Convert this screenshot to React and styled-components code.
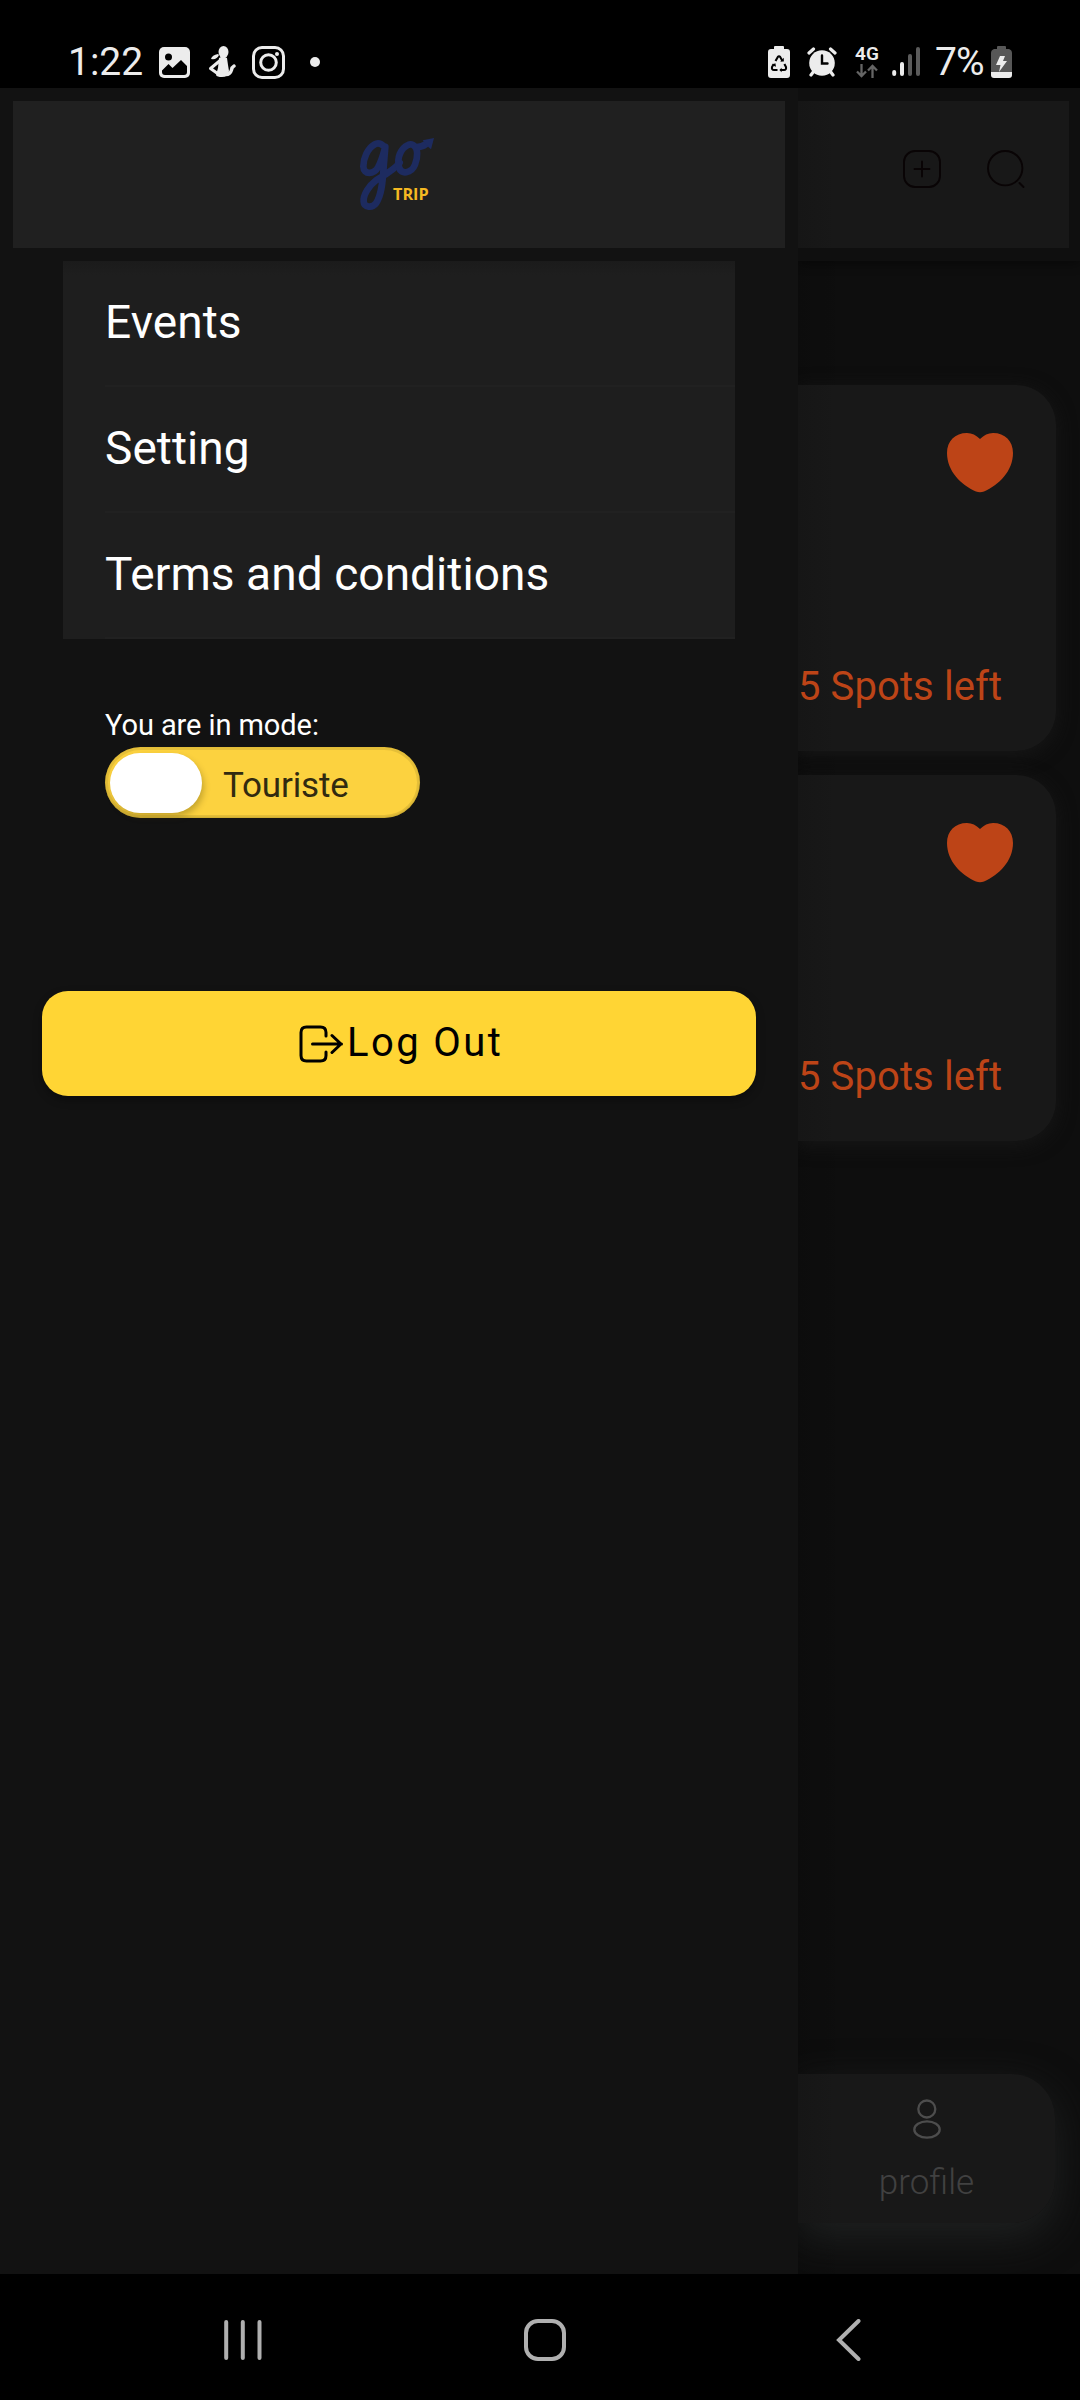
import React from "react";
import styled, { createGlobalStyle } from "styled-components";

const GlobalStyle = createGlobalStyle`
  * { box-sizing: border-box; }
  body { margin: 0; background: #000; font-family: Roboto, "Liberation Sans", sans-serif; }
  svg { display: block; flex: none; }
`;

const Screen = styled.div`
  display: flex;
  flex-direction: column;
  width: 1080px;
  height: 2400px;
  overflow: hidden;
  background: #000;
`;

const StatusBar = styled.header`
  display: flex;
  justify-content: space-between;
  height: 88px;
  padding: 35px 68px 0 68px;
  color: #ececec;
`;

const StatusGroup = styled.div`
  display: flex;
  align-items: center;
  height: 54px;
`;

const StatusText = styled.span`
  width: ${(p) => p.$width}px;
  font-size: 39px;
  line-height: 54px;
  letter-spacing: ${(p) => p.$spacing || 0}px;
  white-space: nowrap;
`;

const StatusIcon = styled.span`
  display: flex;
  margin-left: ${(p) => p.$gap}px;
`;

const Network = styled.div`
  display: flex;
  flex-direction: column;
  align-items: center;
  gap: 2px;
  width: 24px;
  margin-left: 18px;
  padding-bottom: 2px;
  font-size: 19px;
  font-weight: 600;
  line-height: 17px;
`;

const Body = styled.div`
  display: grid;
  grid-template-columns: 798px 282px;
  height: 2186px;
`;

const Drawer = styled.aside`
  display: flex;
  flex-direction: column;
  background: #121212;
`;

const DrawerHeader = styled.div`
  height: 173px;
  padding: 13px;
`;

const LogoPanel = styled.div`
  height: 147px;
  padding: 35px 0 0 345px;
  background: #202020;
`;

const MenuList = styled.nav`
  width: 672px;
  margin-left: 63px;
  padding-left: 42px;
  background: linear-gradient(#1b1b1b, #1e1e1e 14px);
`;

const MenuItem = styled.a`
  display: flex;
  align-items: center;
  height: 126px;
  padding-bottom: 3px;
  border-bottom: 2px solid #212121;
  color: #fff;
  font-size: 46px;
  letter-spacing: 0.07px;
`;

const ModeSection = styled.section`
  display: flex;
  flex-direction: column;
  padding: 68px 0 0 105px;
`;

const ModeLabel = styled.span`
  height: 40px;
  color: #fff;
  font-size: 29px;
  line-height: 36px;
  letter-spacing: -0.08px;
`;

const Toggle = styled.div`
  display: flex;
  align-items: center;
  width: 315px;
  height: 71px;
  padding-left: 5px;
  border-radius: 36px;
  background: #fcd23f;
  box-shadow: inset 0 0 0 3px rgba(90, 80, 20, 0.14), inset 0 -1px 2px rgba(90, 80, 20, 0.2);
`;

const Knob = styled.span`
  width: 92px;
  height: 60px;
  border-radius: 30px;
  background: #fff;
  box-shadow: 2px 4px 6px rgba(60, 50, 0, 0.28);
`;

const ToggleText = styled.span`
  padding: 7px 0 0 21px;
  color: #312a10;
  font-size: 35px;
  line-height: 42px;
  letter-spacing: -0.15px;
`;

const LogoutButton = styled.button`
  display: flex;
  align-items: center;
  width: 714px;
  height: 105px;
  margin: 173px 0 0 42px;
  padding: 0 0 2px 257px;
  border: 0;
  border-radius: 26px;
  background: #ffd534;
  box-shadow: 0 4px 8px rgba(0, 0, 0, 0.35);
  color: #000;
  font-family: inherit;
  font-size: 40px;
  letter-spacing: 2.4px;
`;

const LogoutIcon = styled.span`
  display: flex;
  padding-top: 3px;
  margin-right: 4px;
`;

const Page = styled.main`
  display: flex;
  flex-direction: column;
  overflow: hidden;
  background: linear-gradient(90deg, rgba(0, 0, 0, 0.14), transparent 50px), #0e0e0e;
`;

const PageHeader = styled.div`
  height: 173px;
  padding: 13px 11px 13px 0;
  background: #0f0f0f;
  box-shadow: 0 3px 10px rgba(0, 0, 0, 0.4);
`;

const Actions = styled.div`
  display: flex;
  align-items: flex-start;
  gap: 46px;
  height: 147px;
  padding: 49px 0 0 105px;
  background: linear-gradient(90deg, #161616, #181818 36px);
`;

const Cards = styled.section`
  display: flex;
  flex-direction: column;
  gap: 24px;
  padding-top: 124px;
`;

const Card = styled.article`
  display: flex;
  flex-direction: column;
  justify-content: space-between;
  width: 258px;
  height: 366px;
  padding: 48px 43px 40px 0;
  border-radius: 0 40px 40px 0;
  background: linear-gradient(90deg, #161616, #181818 36px);
  box-shadow: 0 4px 18px 1px #161616;
`;

const Heart = styled.span`
  display: flex;
  justify-content: flex-end;
`;

const Spots = styled.span`
  align-self: flex-end;
  width: 215px;
  color: #bd4417;
  font-size: 40px;
  line-height: 48px;
  letter-spacing: 0.1px;
  white-space: nowrap;
`;

const TabBar = styled.footer`
  display: flex;
  flex-direction: column;
  align-items: center;
  width: 257px;
  height: 149px;
  margin-top: auto;
  margin-bottom: 51px;
  padding-top: 25px;
  border-radius: 0 44px 44px 0;
  background: linear-gradient(90deg, #161616, #181818 36px);
  box-shadow: 0 14px 42px 0 #1f2121;
`;

const TabLabel = styled.span`
  margin-top: 23px;
  color: #414141;
  font-size: 35px;
  font-weight: 300;
  line-height: 42px;
`;

const NavBar = styled.div`
  display: flex;
  align-items: center;
  height: 126px;
  padding: 6px 0 0 223px;
`;

const NavButton = styled.span`
  display: flex;
  margin-right: ${(p) => p.$gap || 0}px;
`;

const Logo = () => (
  <svg width="78" height="76" viewBox="114 78 234 228" fill="none">
    <g stroke="#1d2b60" strokeWidth="20" strokeLinecap="round" strokeLinejoin="round">
      <path d="M193 110C184 101 174 97 164 103C142 116 130 145 130 169C131 196 162 193 174 172C186 151 191 128 196 110L191 171C188 220 184 256 168 280C157 295 132 293 131 275C129 254 148 226 168 211C194 195 224 178 239 158" />
      <path d="M264 105C242 115 230 144 237 171C242 196 275 190 285 164C294 142 295 113 279 105C274 102 268 103 264 105ZM286 111C299 112 309 109 318 102" />
    </g>
    <path d="M342 84L333 118L325 111L308 91Z" fill="#1d2b60" />
    <text x="219" y="269" fill="#f6b922" fontFamily="Open Sans, sans-serif" fontWeight="700" fontSize="49" textLength="107" lengthAdjust="spacingAndGlyphs">TRIP</text>
  </svg>
);

const Gallery = () => (
  <svg width="31" height="31" viewBox="0 0 31 31">
    <rect width="31" height="31" rx="5" fill="#ececec" />
    <circle cx="9.5" cy="10" r="3.5" fill="#000" />
    <path d="M3 23.5L9.5 17L13.5 21L22 13L28 19V25Q28 28 25 28H6Q3 28 3 25Z" fill="#000" />
  </svg>
);

const Figure = () => (
  <svg width="28" height="32" viewBox="0 0 28 32">
    <g fill="#ececec">
      <ellipse cx="15.5" cy="6" rx="5" ry="6" />
      <path d="M3 13Q4 9 10 8L11 9Q9 14 3 13Z" />
      <path d="M11 12Q15 9 19 12L20 19L21 25Q20 31 14 31Q9 31 8 29L10 22Z" />
    </g>
    <path d="M11.5 15L2.5 22.5L11 28.5" fill="none" stroke="#ececec" strokeWidth="3" strokeLinecap="round" strokeLinejoin="round" />
    <path d="M17 28.5Q22 29 23.5 24Q24 21 26 20" fill="none" stroke="#ececec" strokeWidth="3.4" strokeLinecap="round" />
  </svg>
);

const Instagram = () => (
  <svg width="33" height="33" viewBox="0 0 33 33" fill="none" stroke="#ececec" strokeWidth="3">
    <rect x="1.5" y="1.5" width="30" height="30" rx="8.5" />
    <circle cx="16.5" cy="16.5" r="7.8" />
    <circle cx="25" cy="8" r="2" fill="#ececec" stroke="none" />
  </svg>
);

const Dot = () => (
  <svg width="10" height="10"><circle cx="5" cy="5" r="5" fill="#ececec" /></svg>
);

const RecycleBattery = () => (
  <svg width="22" height="32" viewBox="0 0 22 32">
    <path d="M6 1Q6 0 7 0H15Q16 0 16 1V3H19Q22 3 22 6V29Q22 32 19 32H3Q0 32 0 29V6Q0 3 3 3H6Z" fill="#ececec" />
    <path d="M7.5 15L9.8 11Q11 9.5 12.2 11L14.5 15M16.4 18L18 21Q18.5 24 16 24H12.5M9.5 24H6Q3.5 24 4 21L5.8 18" fill="none" stroke="#000" strokeWidth="2.1" />
    <path d="M12.2 15.5H15.8V11.8ZM13.6 21.8V26.2L11.4 24ZM3.6 19L7.4 17.2L8 20.8Z" fill="#000" />
  </svg>
);

const Alarm = () => (
  <svg width="30" height="30" viewBox="0 0 30 30" stroke="#ececec" strokeWidth="3.2" strokeLinecap="round" fill="none">
    <circle cx="15" cy="16" r="12.8" fill="#ececec" stroke="none" />
    <path d="M2 6L6.5 2M28 6L23.5 2M4 28L7 24M26 28L23 24" />
    <path d="M15 8.5V16.5H20.5" stroke="#000" strokeWidth="2.4" />
  </svg>
);

const DataArrows = () => (
  <svg width="22" height="14" viewBox="0 0 22 14" fill="none" stroke="#656565" strokeWidth="2.3">
    <path d="M5.5 0V12M1 7.5L5.5 12L10 7.5M16.5 14V2M12 6.5L16.5 2L21 6.5" />
  </svg>
);

const Signal = () => (
  <svg width="29" height="30" viewBox="0 0 29 30" strokeWidth="4" strokeLinecap="round">
    <path d="M2.2 25V27M10 17V27" stroke="#ececec" />
    <path d="M18 9V27M26 2V27" stroke="#5b5b5b" />
  </svg>
);

const ChargingBattery = () => (
  <svg width="21" height="32" viewBox="0 0 21 32">
    <path d="M6 1Q6 0 7 0H14Q15 0 15 1V3H18Q21 4 21 7V27H0V7Q0 4 3 3H6Z" fill="#575757" />
    <path d="M0 26H21V29Q21 32 18 32H3Q0 32 0 29Z" fill="#ececec" />
    <path d="M9 10H14L12 15H16L8 26L9.5 19H5Z" fill="#ececec" />
  </svg>
);

const LogoutGlyph = () => (
  <svg width="44" height="38" viewBox="0 0 44 38" fill="none" stroke="#000" strokeWidth="3" strokeLinecap="round" strokeLinejoin="round">
    <path d="M27 11V7.5Q27 2 21.5 2H7.5Q2 2 2 7.5V30.5Q2 36 7.5 36H21.5Q27 36 27 30.5V27M13.5 19H42.5M33 10.5L42 19L33 27.5" />
  </svg>
);

const AddGlyph = () => (
  <svg width="38" height="38" viewBox="0 0 38 38" fill="none" stroke="#090405" strokeWidth="1.9" strokeLinecap="round">
    <rect x="1" y="1" width="36" height="36" rx="11" />
    <path d="M19 11.5V26.5M11.5 19H26.5" />
  </svg>
);

const SearchGlyph = () => (
  <svg width="39" height="38" viewBox="0 0 39 38" fill="none" stroke="#090405" strokeWidth="1.9" strokeLinecap="round">
    <circle cx="18.2" cy="18.2" r="17.2" />
    <path d="M32.5 33L36.5 37" />
  </svg>
);

const HeartGlyph = () => (
  <svg width="66" height="60" viewBox="0 0 66 60">
    <path d="M33 6C37 2 41 0 46 0C58 0 66 8 66 20C66 38 52 52 37 58.5Q33 60 29 58.5C14 52 0 38 0 20C0 8 8 0 20 0C25 0 29 2 33 6Z" fill="#bd4417" />
  </svg>
);

const ProfileGlyph = () => (
  <svg width="28" height="40" viewBox="0 0 28 40" fill="none" stroke="#4d4d4d" strokeWidth="2.3">
    <circle cx="13.8" cy="10" r="8.5" />
    <ellipse cx="14" cy="30.5" rx="12.7" ry="8.2" />
  </svg>
);

const SpotCard = ({ spots }) => (
  <Card>
    <Heart><HeartGlyph /></Heart>
    <Spots>{spots} Spots left</Spots>
  </Card>
);

export default function App() {
  return (
    <Screen>
      <GlobalStyle />
      <StatusBar>
        <StatusGroup>
          <StatusText $width={76}>1:22</StatusText>
          <StatusIcon $gap={15}><Gallery /></StatusIcon>
          <StatusIcon $gap={18}><Figure /></StatusIcon>
          <StatusIcon $gap={16}><Instagram /></StatusIcon>
          <StatusIcon $gap={25}><Dot /></StatusIcon>
        </StatusGroup>
        <StatusGroup>
          <RecycleBattery />
          <StatusIcon $gap={17}><Alarm /></StatusIcon>
          <Network>4G<DataArrows /></Network>
          <StatusIcon $gap={13}><Signal /></StatusIcon>
          <StatusIcon $gap={14}><StatusText $width={50} $spacing={-1}>7%</StatusText></StatusIcon>
          <StatusIcon $gap={6}><ChargingBattery /></StatusIcon>
        </StatusGroup>
      </StatusBar>
      <Body>
        <Drawer>
          <DrawerHeader><LogoPanel><Logo /></LogoPanel></DrawerHeader>
          <MenuList>
            {["Events", "Setting", "Terms and conditions"].map((label) => (
              <MenuItem key={label}>{label}</MenuItem>
            ))}
          </MenuList>
          <ModeSection>
            <ModeLabel>You are in mode:</ModeLabel>
            <Toggle><Knob /><ToggleText>Touriste</ToggleText></Toggle>
          </ModeSection>
          <LogoutButton><LogoutIcon><LogoutGlyph /></LogoutIcon>Log Out</LogoutButton>
        </Drawer>
        <Page>
          <PageHeader>
            <Actions><AddGlyph /><SearchGlyph /></Actions>
          </PageHeader>
          <Cards>
            <SpotCard spots={5} />
            <SpotCard spots={5} />
          </Cards>
          <TabBar>
            <ProfileGlyph />
            <TabLabel>profile</TabLabel>
          </TabBar>
        </Page>
      </Body>
      <NavBar>
        <NavButton $gap={261}>
          <svg width="40" height="42" viewBox="0 0 40 42" stroke="#b0b0b0" strokeWidth="4" strokeLinecap="round"><path d="M3.2 3V39M19.8 3V39M36.5 3V39" /></svg>
        </NavButton>
        <NavButton $gap={270}>
          <svg width="42" height="42" viewBox="0 0 42 42" fill="none" stroke="#b0b0b0" strokeWidth="4"><rect x="2" y="2" width="38" height="38" rx="12" /></svg>
        </NavButton>
        <NavButton>
          <svg width="25" height="42" viewBox="0 0 25 42" fill="none" stroke="#b0b0b0" strokeWidth="4" strokeLinecap="round"><path d="M22.5 2L3 21L22.5 40" /></svg>
        </NavButton>
      </NavBar>
    </Screen>
  );
}
